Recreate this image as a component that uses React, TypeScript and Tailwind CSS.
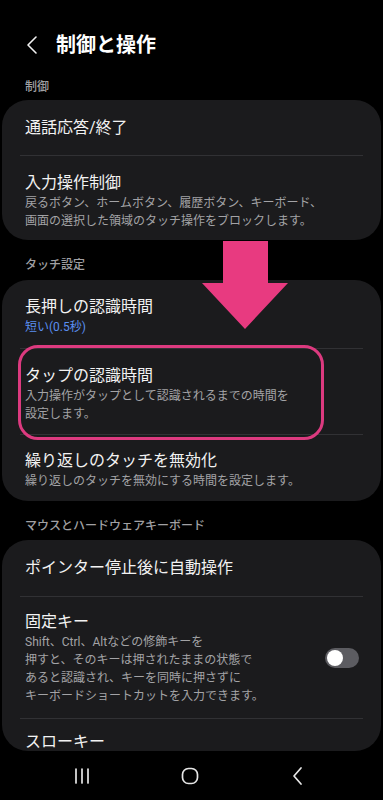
import React from "react";

const font = "font-['Roboto','Noto_Sans_CJK_JP',sans-serif]";

function Divider() {
  return <div className="mx-[18px] h-px bg-[#313134]" />;
}

function Row({
  title,
  sub,
  blue,
  className = "",
}: {
  title: string;
  sub?: React.ReactNode;
  blue?: string;
  className?: string;
}) {
  return (
    <div className={`px-[23px] ${className}`}>
      <div className="text-[16px] leading-[22px] text-[#f2f2f2]">{title}</div>
      {blue && <div className="text-[12px] leading-[18px] text-[#5a8ff0]">{blue}</div>}
      {sub && <div className="text-[12px] leading-[18px] text-[#a3a3a6]">{sub}</div>}
    </div>
  );
}

function SectionLabel({ children, className = "" }: { children: React.ReactNode; className?: string }) {
  return (
    <div className={`px-[25px] text-[12px] leading-[18px] font-medium text-[#a1a1a4] ${className}`}>
      {children}
    </div>
  );
}

export default function App() {
  return (
    <div className={`${font} w-[383px] h-[800px] bg-black flex flex-col overflow-hidden`}>
      <div className="relative flex-1 overflow-hidden">
        {/* Header */}
        <div className="mt-[17px] h-[56px] flex items-center">
          <svg width="14" height="20" viewBox="0 0 14 20" className="ml-[25px]" fill="none" stroke="#f2f2f2" strokeWidth="1.6" strokeLinecap="round" strokeLinejoin="round">
            <path d="M11 2 L3 10 L11 18" />
          </svg>
          <h1 className="ml-[17px] text-[20px] leading-[28px] font-bold text-white">制御と操作</h1>
        </div>

        <SectionLabel className="pt-[5px] pb-[4px]">制御</SectionLabel>
        <div className="mx-[2px] rounded-[26px] bg-[#1b1b1d]">
          <Row title="通話応答/終了" className="pt-[17px] pb-[16px]" />
          <Divider />
          <Row
            title="入力操作制御"
            className="pt-[16px] pb-[10px]"
            sub={
              <>
                戻るボタン、ホームボタン、履歴ボタン、キーボード、
                <br />
                画面の選択した領域のタッチ操作をブロックします。
              </>
            }
          />
        </div>

        <SectionLabel className="pt-[16px] pb-[6px]">タッチ設定</SectionLabel>
        <div className="relative mx-[2px] rounded-[26px] bg-[#1b1b1d]">
          <Row title="長押しの認識時間" blue="短い(0.5秒)" className="pt-[16px] pb-[12px]" />
          <Divider />
          <Row
            title="タップの認識時間"
            className="pt-[16px] pb-[11px]"
            sub={
              <>
                入力操作がタップとして認識されるまでの時間を
                <br />
                設定します。
              </>
            }
          />
          <Divider />
          <Row
            title="繰り返しのタッチを無効化"
            className="pt-[15px] pb-[11px]"
            sub="繰り返しのタッチを無効にする時間を設定します。"
          />
          {/* highlight */}
          <div className="absolute left-[16px] top-[65px] w-[306px] h-[95px] rounded-[20px] border-[3px] border-[#dc3a7f]" />
        </div>

        <SectionLabel className="pt-[16px] pb-[5px]">マウスとハードウェアキーボード</SectionLabel>
        <div className="mx-[2px] h-[211px] overflow-hidden rounded-[26px] bg-[#1b1b1d]">
          <Row title="ポインター停止後に自動操作" className="pt-[17px] pb-[17px]" />
          <Divider />
          <div className="flex items-center pr-[22px]">
            <Row
              title="固定キー"
              className="flex-1 pt-[14px] pb-[13px]"
              sub={
                <>
                  Shift、Ctrl、Altなどの修飾キーを
                  <br />
                  押すと、そのキーは押されたままの状態で
                  <br />
                  あると認識され、キーを同時に押さずに
                  <br />
                  キーボードショートカットを入力できます。
                </>
              }
            />
            <div className="w-[34px] h-[20px] rounded-full bg-[#5c5c61] flex items-center pl-[2px]">
              <div className="w-[16px] h-[16px] rounded-full bg-white" />
            </div>
          </div>
          <Divider />
          <Row title="スローキー" className="pt-[12px]" />
        </div>

        {/* arrow */}
        <svg className="absolute left-[202px] top-[241px]" width="86" height="88" viewBox="0 0 86 88">
          <polygon points="21,0 66,0 66,42 86,42 43,88 0,42 21,42" fill="#e83a80" />
        </svg>
      </div>

      {/* Nav bar */}
      <div className="h-[48px] flex items-center">
        <svg className="ml-[73px]" width="18" height="18" viewBox="0 0 18 18" stroke="#e6e6e6" strokeWidth="1.7" strokeLinecap="round">
          <path d="M3 2 V16 M9 2 V16 M15 2 V16" />
        </svg>
        <svg className="ml-[90px]" width="18" height="18" viewBox="0 0 18 18" fill="none" stroke="#e6e6e6" strokeWidth="1.7">
          <rect x="1.5" y="1.5" width="15" height="15" rx="6" />
        </svg>
        <svg className="ml-[92px]" width="14" height="20" viewBox="0 0 14 20" fill="none" stroke="#e6e6e6" strokeWidth="1.7" strokeLinecap="round" strokeLinejoin="round">
          <path d="M10 2 L3 10 L10 18" />
        </svg>
      </div>
    </div>
  );
}
